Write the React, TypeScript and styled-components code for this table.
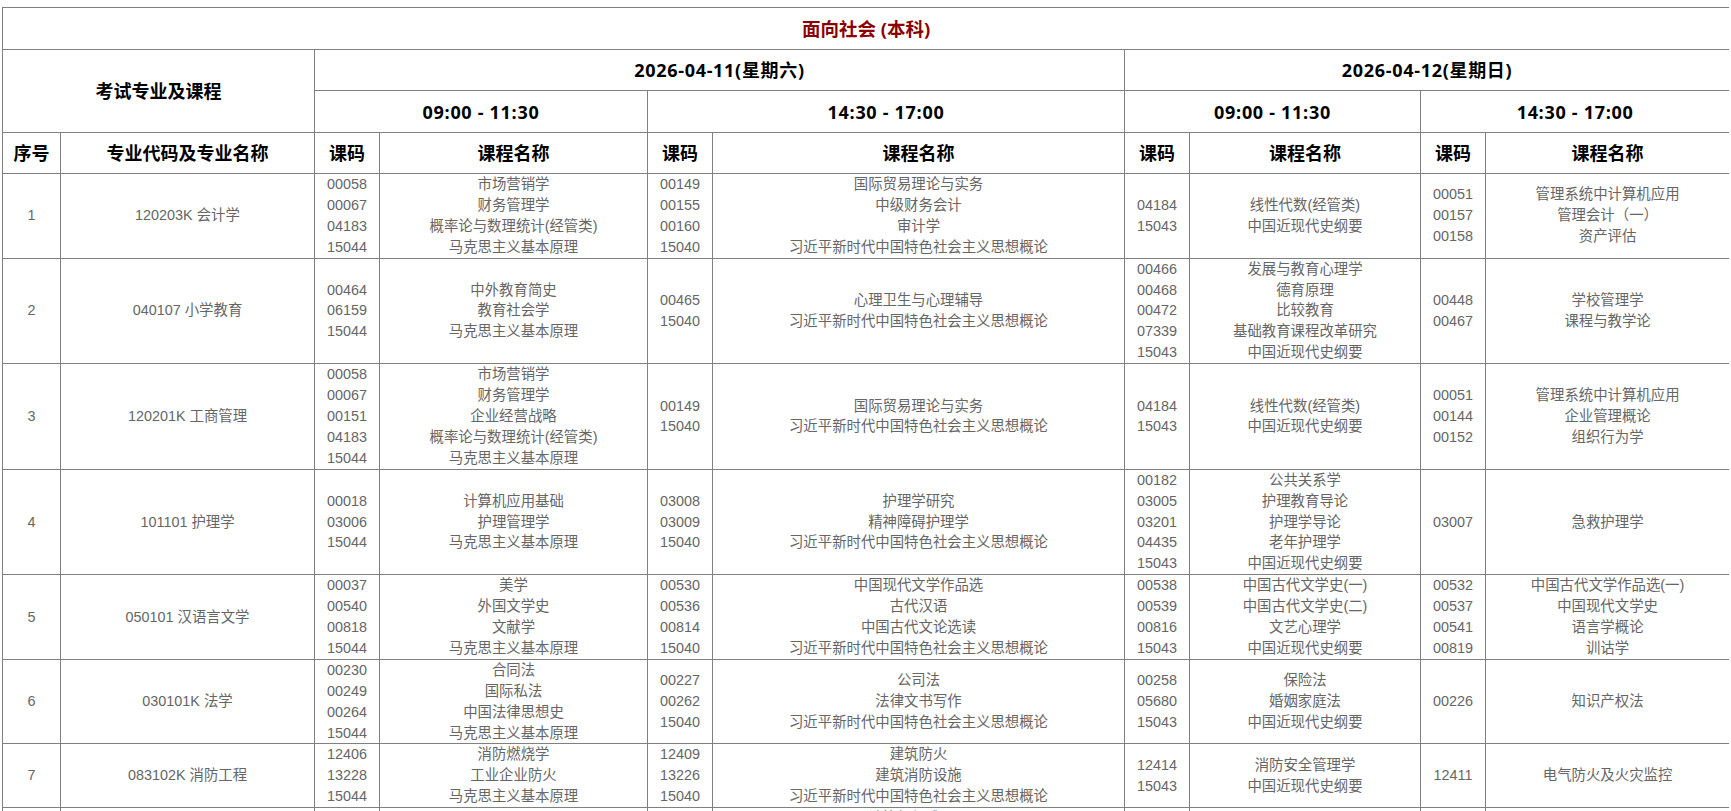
import React from "react";
import styled, { createGlobalStyle } from "styled-components";

const GlobalStyle = createGlobalStyle`
  html, body { background: #fff; }
  body {
    margin: 7px 2px 0 2px;
    font-family: "Liberation Sans", "Noto Sans CJK SC", sans-serif;
  }
`;

const Table = styled.table`
  width: 1727px;
  table-layout: fixed;
  border-collapse: collapse;
  border: 1px solid #808080;
`;

const Th = styled.th<{ $title?: boolean; $h?: number; $wide?: boolean }>`
  border: 1px solid #808080;
  height: ${(p) => p.$h ?? 40}px;
  padding: 0;
  font-family: "Open Sans", "Noto Sans CJK SC", sans-serif;
  font-weight: 700;
  font-size: ${(p) => (p.$title ? 18.5 : 18)}px;
  letter-spacing: ${(p) => (p.$wide ? "0.7px" : "normal")};
  color: ${(p) => (p.$title ? "#8b0000" : "#000")};
  text-align: center;
  vertical-align: middle;
  line-height: 24px;
`;

const Td = styled.td`
  border: 1px solid #808080;
  padding: 0;
  font-family: "Liberation Sans", "Noto Sans CJK SC", sans-serif;
  font-size: 14.4px;
  line-height: 20.9px;
  color: #666;
  text-align: center;
  vertical-align: middle;
`;

const Line = styled.div`
  white-space: nowrap;
`;

type Slot = [string, string][];
type Row = { no: number; major: string; slots: Slot[] };

const MKS: [string, string] = ["15044", "马克思主义基本原理"];
const XJP: [string, string] = ["15040", "习近平新时代中国特色社会主义思想概论"];
const JDS: [string, string] = ["15043", "中国近现代史纲要"];

const rows: Row[] = [
  {
    no: 1,
    major: "120203K 会计学",
    slots: [
      [["00058", "市场营销学"], ["00067", "财务管理学"], ["04183", "概率论与数理统计(经管类)"], MKS],
      [["00149", "国际贸易理论与实务"], ["00155", "中级财务会计"], ["00160", "审计学"], XJP],
      [["04184", "线性代数(经管类)"], JDS],
      [["00051", "管理系统中计算机应用"], ["00157", "管理会计（一）"], ["00158", "资产评估"]],
    ],
  },
  {
    no: 2,
    major: "040107 小学教育",
    slots: [
      [["00464", "中外教育简史"], ["06159", "教育社会学"], MKS],
      [["00465", "心理卫生与心理辅导"], XJP],
      [["00466", "发展与教育心理学"], ["00468", "德育原理"], ["00472", "比较教育"], ["07339", "基础教育课程改革研究"], JDS],
      [["00448", "学校管理学"], ["00467", "课程与教学论"]],
    ],
  },
  {
    no: 3,
    major: "120201K 工商管理",
    slots: [
      [["00058", "市场营销学"], ["00067", "财务管理学"], ["00151", "企业经营战略"], ["04183", "概率论与数理统计(经管类)"], MKS],
      [["00149", "国际贸易理论与实务"], XJP],
      [["04184", "线性代数(经管类)"], JDS],
      [["00051", "管理系统中计算机应用"], ["00144", "企业管理概论"], ["00152", "组织行为学"]],
    ],
  },
  {
    no: 4,
    major: "101101 护理学",
    slots: [
      [["00018", "计算机应用基础"], ["03006", "护理管理学"], MKS],
      [["03008", "护理学研究"], ["03009", "精神障碍护理学"], XJP],
      [["00182", "公共关系学"], ["03005", "护理教育导论"], ["03201", "护理学导论"], ["04435", "老年护理学"], JDS],
      [["03007", "急救护理学"]],
    ],
  },
  {
    no: 5,
    major: "050101 汉语言文学",
    slots: [
      [["00037", "美学"], ["00540", "外国文学史"], ["00818", "文献学"], MKS],
      [["00530", "中国现代文学作品选"], ["00536", "古代汉语"], ["00814", "中国古代文论选读"], XJP],
      [["00538", "中国古代文学史(一)"], ["00539", "中国古代文学史(二)"], ["00816", "文艺心理学"], JDS],
      [["00532", "中国古代文学作品选(一)"], ["00537", "中国现代文学史"], ["00541", "语言学概论"], ["00819", "训诂学"]],
    ],
  },
  {
    no: 6,
    major: "030101K 法学",
    slots: [
      [["00230", "合同法"], ["00249", "国际私法"], ["00264", "中国法律思想史"], MKS],
      [["00227", "公司法"], ["00262", "法律文书写作"], XJP],
      [["00258", "保险法"], ["05680", "婚姻家庭法"], JDS],
      [["00226", "知识产权法"]],
    ],
  },
  {
    no: 7,
    major: "083102K 消防工程",
    slots: [
      [["12406", "消防燃烧学"], ["13228", "工业企业防火"], MKS],
      [["12409", "建筑防火"], ["13226", "建筑消防设施"], XJP],
      [["12414", "消防安全管理学"], JDS],
      [["12411", "电气防火及火灾监控"]],
    ],
  },
  {
    no: 8,
    major: "080901 计算机科学与技术",
    slots: [
      [["02197", "概率论与数理统计(二)"], MKS],
      [["02318", "计算机组成原理"], ["02325", "计算机系统结构"], ["02331", "数据结构"], XJP],
      [["02323", "操作系统概论"], JDS],
      [["02326", "操作系统"]],
    ],
  },
];

const widths = [58, 254, 65, 268, 65, 412, 65, 231, 65, 244];

const SlotCells: React.FC<{ slot: Slot }> = ({ slot }) => (
  <>
    <Td>
      {slot.map(([c], i) => (
        <Line key={i}>{c}</Line>
      ))}
    </Td>
    <Td>
      {slot.map(([, n], i) => (
        <Line key={i}>{n}</Line>
      ))}
    </Td>
  </>
);

export default function App() {
  return (
    <>
      <GlobalStyle />
      <Table>
        <colgroup>
          {widths.map((w, i) => (
            <col key={i} style={{ width: w }} />
          ))}
        </colgroup>
        <thead>
          <tr>
            <Th colSpan={10} $title $h={41}>
              面向社会 (本科)
            </Th>
          </tr>
          <tr>
            <Th colSpan={2} rowSpan={2}>
              考试专业及课程
            </Th>
            <Th colSpan={4} $wide>2026-04-11(星期六)</Th>
            <Th colSpan={4} $wide>2026-04-12(星期日)</Th>
          </tr>
          <tr>
            <Th colSpan={2} $h={41} $wide>09:00 - 11:30</Th>
            <Th colSpan={2} $h={41} $wide>14:30 - 17:00</Th>
            <Th colSpan={2} $h={41} $wide>09:00 - 11:30</Th>
            <Th colSpan={2} $h={41} $wide>14:30 - 17:00</Th>
          </tr>
          <tr>
            <Th>序号</Th>
            <Th>专业代码及专业名称</Th>
            {[0, 1, 2, 3].map((i) => (
              <React.Fragment key={i}>
                <Th>课码</Th>
                <Th>课程名称</Th>
              </React.Fragment>
            ))}
          </tr>
        </thead>
        <tbody>
          {rows.map((r) => (
            <tr key={r.no}>
              <Td>{r.no}</Td>
              <Td>{r.major}</Td>
              {r.slots.map((s, i) => (
                <SlotCells key={i} slot={s} />
              ))}
            </tr>
          ))}
        </tbody>
      </Table>
    </>
  );
}
